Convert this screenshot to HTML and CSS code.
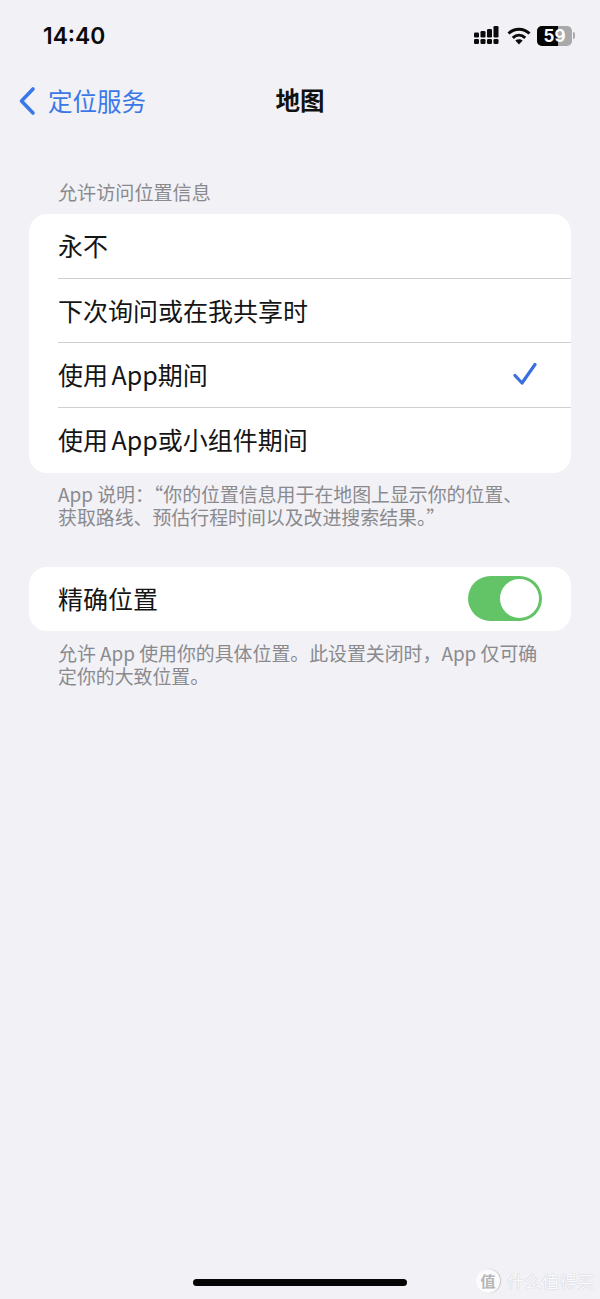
FILE: index.html
```html
<!DOCTYPE html>
<html lang="zh-CN">
<head>
<meta charset="utf-8">
<title>地图</title>
<link rel="stylesheet" href="styles.css">
</head>
<body>
<div class="page">
  <header class="status">
    <span class="time">14:40</span>
    <div class="status-icons">
      <svg class="signal" width="25" height="19" viewBox="0 0 25 19"><g fill="#0b0b0b"><rect x="0" y="13" width="5" height="5" rx="1.3"/><rect x="6.5" y="13" width="5" height="5" rx="1.3"/><rect x="13" y="13" width="5" height="5" rx="1.3"/><rect x="19.5" y="13" width="5" height="5" rx="1.3"/><rect x="0" y="6.5" width="5" height="5" rx="1.3"/><rect x="6.5" y="5" width="5" height="6.500" rx="1.300"/><rect x="13" y="3" width="5" height="8.500" rx="1.300"/><rect x="19.5" y="0" width="5" height="11.500" rx="1.300"/></g></svg>
      <svg class="wifi" width="24" height="18" viewBox="0 0 24 18"><g fill="none" stroke="#0b0b0b" stroke-width="3"><path d="M1.500 6.500C7.500 .8 16.500 .8 22.500 6.500"/><path d="M5.800 10.800C9.500 7.300 14.500 7.300 18.200 10.800"/></g><path d="M8.300 13.600C10.500 11.700 13.500 11.700 15.700 13.600L12 17.500Z" fill="#0b0b0b"/></svg>
      <div class="battery"><span class="battery-fill"></span><span class="battery-num">59</span></div>
      <span class="battery-cap"></span>
    </div>
  </header>
  <nav class="nav">
    <div class="back">
      <svg width="18" height="30" viewBox="0 0 18 30"><path d="M15 3L3.500 15L15 27" fill="none" stroke="#3b78e7" stroke-width="3.600" stroke-linecap="round" stroke-linejoin="round"/></svg>
      <span>定位服务</span>
    </div>
    <h1 class="title">地图</h1>
  </nav>
  <main class="content">
    <p class="section-label">允许访问位置信息</p>
    <section class="card">
      <div class="row"><span>永不</span></div>
      <div class="row"><span>下次询问或在我共享时</span></div>
      <div class="row"><span>使用 App期间</span>
        <svg class="check" width="24" height="24" viewBox="0 0 24 24"><path d="M2 13.500L9 21L22 2.500" fill="none" stroke="#3a6fe0" stroke-width="3.200" stroke-linecap="round" stroke-linejoin="round"/></svg>
      </div>
      <div class="row"><span>使用 App或小组件期间</span></div>
    </section>
    <p class="note">App 说明&#xFF1A;&#x201C;你的位置信息用于在地图上显示你的位置、<br>获取路线、预估行程时间以及改进搜索结果。&#x201D;</p>
    <section class="card card-second">
      <div class="row"><span>精确位置</span>
        <div class="toggle"><span class="knob"></span></div>
      </div>
    </section>
    <p class="note">允许 App 使用你的具体位置。此设置关闭时&#xFF0C;App 仅可确<br>定你的大致位置。</p>
  </main>
  <footer class="footer">
    <span class="home-bar"></span>
    <div class="watermark"><span class="mark">值</span><span>什么值得买</span></div>
  </footer>
</div>
</body>
</html>
```
FILE: styles.css
```css
* { box-sizing: border-box; }
html, body { margin: 0; padding: 0; }
body {
  background: #f1f1f6;
  font-family: "Noto Sans CJK SC", "Inter", sans-serif;
  color: #111;
}
.page {
  width: 600px;
  height: 1299px;
  display: flex;
  flex-direction: column;
  position: relative;
  overflow: hidden;
}
.status {
  height: 71px;
  padding: 0 25px 0 43px;
  display: flex;
  justify-content: space-between;
  align-items: center;
}
.time {
  font-family: Inter, sans-serif;
  font-size: 22.800px;
  font-weight: 600;
  color: #0b0b0b;
}
.status-icons { display: flex; align-items: center; }
.signal { margin-right: 8px; }
.wifi { margin-right: 6px; }
.battery {
  width: 35px;
  height: 20px;
  border-radius: 5px;
  background: #a9a9ab;
  position: relative;
  overflow: hidden;
}
.battery-fill {
  display: block;
  width: 21px;
  height: 100%;
  background: #050505;
}
.battery-num {
  position: absolute;
  left: 0;
  right: 0;
  top: 0;
  text-align: center;
  font-family: Inter, sans-serif;
  font-size: 17px;
  line-height: 20px;
  font-weight: 700;
  color: #fff;
}
.battery-cap {
  width: 2px;
  height: 7px;
  margin-left: 1px;
  background: #a9a9ab;
  border-radius: 0 2px 2px 0;
}
.nav {
  height: 60px;
  position: relative;
  display: flex;
  align-items: center;
  justify-content: center;
}
.back {
  position: absolute;
  left: 18px;
  top: 15px;
  display: flex;
  align-items: center;
  gap: 12px;
  color: #3b78e7;
  font-size: 24.500px;
  line-height: 30px;
}
.title {
  margin: -2px 0 0;
  font-size: 24.500px;
  line-height: 30px;
  font-weight: 700;
  color: #111;
}
.content { padding: 0 29px; }
.section-label {
  margin: 49px 0 10px;
  padding-left: 29px;
  font-size: 19.100px;
  line-height: 24px;
  color: #8a8a8e;
}
.card {
  background: #fff;
  border-radius: 18px;
  overflow: hidden;
}
.card-second { margin-top: 38.500px; }
.row {
  height: 64.700px;
  margin-left: 29px;
  padding-right: 34px;
  padding-bottom: 2px;
  display: flex;
  align-items: center;
  justify-content: space-between;
  font-size: 25px;
  word-spacing: -2px;
  color: #151515;
  border-bottom: 1px solid #cfcfd2;
}
.row:last-child { border-bottom: 0; }
.check { display: block; }
.toggle {
  width: 74px;
  height: 45px;
  margin-right: -5px;
  border-radius: 23px;
  background: #62c466;
  padding: 3px;
  display: flex;
  justify-content: flex-end;
}
.knob {
  width: 39px;
  height: 39px;
  border-radius: 50%;
  background: #fff;
}
.note {
  margin: 9.500px 0 0;
  padding-left: 29px;
  font-size: 18.900px;
  line-height: 23px;
  color: #8a8a8e;
}
.footer {
  margin-top: auto;
  height: 40px;
  position: relative;
}
.home-bar {
  position: absolute;
  left: 193px;
  top: 20px;
  width: 214px;
  height: 7px;
  border-radius: 4px;
  background: #050505;
}
.watermark {
  position: absolute;
  left: 476px;
  top: 10px;
  display: flex;
  align-items: center;
  gap: 7px;
  font-size: 17.500px;
  line-height: 24px;
  color: #fafafc;
  text-shadow: 0 0 1px #b5b5b8;
}
.mark {
  width: 24px;
  height: 24px;
  border-radius: 50%;
  background: #fbfbfd;
  color: #b5b5b8;
  font-size: 15px;
  font-weight: 700;
  text-align: center;
  text-shadow: none;
  box-shadow: 1px 0 1px #c4c4c8;
}
```
